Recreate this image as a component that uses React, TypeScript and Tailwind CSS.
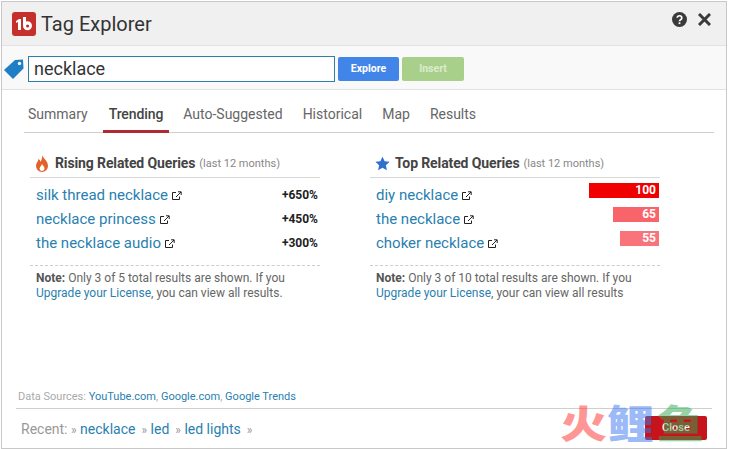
import React from "react";

const font = { fontFamily: "Roboto, sans-serif" };

function Ext() {
  return (
    <svg width="10" height="10" viewBox="0 0 10 10" className="inline-block ml-[4px] align-[-1px]" fill="none" stroke="#222" strokeWidth="1">
      <path d="M7.5 5.5v3h-7v-7h3.5" />
      <path d="M4 6l5-5M6 .8h3.2V4" />
    </svg>
  );
}

function Row({ text, right }: { text: string; right: React.ReactNode }) {
  return (
    <div className="flex h-[24px] items-center justify-between">
      <span className="text-[15px] text-[#2a7fb0]">
        {text}
        <Ext />
      </span>
      {right}
    </div>
  );
}

function Pct({ v }: { v: string }) {
  return <span className="text-[12px] font-bold text-[#222] mr-[2px]">{v}</span>;
}

function Bar({ w, bg, v }: { w: string; bg: string; v: string }) {
  return (
    <span className={`h-[15px] ${w} ${bg} mr-[1px] text-white text-[12px] font-bold leading-[15px] text-right pr-[3px] -mt-[9px]`}>{v}</span>
  );
}

function Panel({
  icon,
  title,
  rows,
  note,
  tail,
}: {
  icon: React.ReactNode;
  title: string;
  rows: React.ReactNode;
  note: string;
  tail: string;
}) {
  return (
    <div className="w-[290px]">
      <div className="flex items-center h-[28px] border-b border-[#d8d8d8] pl-[5px]">
        <span className="w-[20px] flex">{icon}</span>
        <span className="text-[14px] font-bold text-[#444] tracking-[-0.12px]">{title}</span>
        <span className="text-[11px] text-[#888] ml-[4px] mt-[1px]">(last 12 months)</span>
      </div>
      <div className="pt-[5px] pl-[6px] pb-[10px] border-b border-dashed border-[#ccc]">{rows}</div>
      <div className="pl-[6px] pt-[5px] text-[12px] leading-[15px] text-[#666]">
        <b className="text-[#555]">Note:</b> {note}
        <br />
        <span className="text-[#2a7fb0]">Upgrade your License</span>, {tail}
      </div>
    </div>
  );
}

export default function App() {
  return (
    <div style={font} className="relative w-[729px] h-[449px] overflow-hidden bg-white">
      <div className="flex flex-col w-[726px] h-[448px] ml-[1px] mt-[1px] border border-[#c8c8c8] bg-white">
        <header className="flex items-center justify-between h-[44px] bg-[#f0f0f0] border-b border-[#e2e2e2] pl-[10px] pr-[15px] shrink-0">
          <div className="flex items-center gap-[5px]">
            <svg width="24" height="24" viewBox="0 0 24 24">
              <rect width="24" height="24" rx="3" fill="#c4302b" />
              <path d="M4 9l3-2h2v11H6v-8l-2 1zM11 5h3v4.500a4.500 4.500 0 1 1-3 4zM14 14a1.600 1.600 0 1 0 3.200 0a1.600 1.600 0 0 0-3.200 0z" fill="#fff" fillRule="evenodd" />
            </svg>
            <span className="text-[20px] text-[#333]">Tag Explorer</span>
          </div>
          <div className="flex items-center gap-[11px] pb-[8px]">
            <svg width="15" height="15" viewBox="0 0 15 15">
              <circle cx="7.500" cy="7.500" r="7.500" fill="#3a3a3a" />
              <path d="M5.200 5.800a2.300 2.100 0 1 1 3.400 1.900c-.8.500-1.100.8-1.100 1.600" stroke="#fff" strokeWidth="1.700" fill="none" />
              <rect x="6.600" y="10.300" width="1.800" height="1.800" fill="#fff" />
            </svg>
            <svg width="13" height="13" viewBox="0 0 13 13" stroke="#3a3a3a" strokeWidth="3">
              <path d="M1 1l11 11M12 1L1 12" />
            </svg>
          </div>
        </header>
        <div className="flex items-center h-[44px] pt-[3px] bg-[#f9f9f9] border-b border-[#e2e2e2] shrink-0 pl-[1px]">
          <svg width="22" height="22" viewBox="0 0 22 22" className="mr-[3px]">
            <path d="M1 12L12 2l8-.500.500 9L10 21z" fill="#1f7fc4" />
            <circle cx="16.500" cy="5.500" r="1.700" fill="#f9f9f9" />
          </svg>
          <div className="w-[307px] h-[26px] border border-[#2f7fa8] bg-white text-[18px] leading-[24px] text-[#333] pl-[5px]">necklace</div>
          <button className="ml-[3px] w-[61px] h-[24px] rounded-[2px] bg-[#4285e8] text-white text-[10.500px] font-bold">Explore</button>
          <button className="ml-[3px] w-[62px] h-[24px] rounded-[2px] bg-[#a9d08a] text-[#dcebcf] text-[10.500px] font-bold">Insert</button>
        </div>
        <nav className="flex ml-[22px] mr-[12px] h-[43px] border-b border-[#cfcfcf] text-[14px] text-[#666] shrink-0 pl-[4px] gap-[20px]">
          <span className="pt-[14px]">Summary</span>
          <span className="relative pt-[14px] ml-[1px] font-medium text-[#444] tracking-[-0.1px]">
            Trending
            <span className="absolute -left-[6px] -right-[6px] bottom-[-1px] h-[3px] bg-[#b02a30]" />
          </span>
          <span className="pt-[14px]">Auto-Suggested</span>
          <span className="pt-[14px]">Historical</span>
          <span className="pt-[14px]">Map</span>
          <span className="pt-[14px]">Results</span>
        </nav>
        <main className="flex gap-[50px] pl-[28px] pt-[17px] flex-1">
          <Panel
            icon={
              <svg width="14" height="18" viewBox="0 0 14 18">
                <path d="M7 0c1 3 6 6 6 11a6 6 0 0 1-12 0c0-3 2-4 2.500-7C5 5 5.500 6 5.500 7 6.500 5 7.500 3 7 0z" fill="#e2622a" />
                <path d="M7 9c1 2 3 3 2.500 5a2.600 2.600 0 0 1-5 0C4.500 12 6.500 11 7 9z" fill="#fff" />
              </svg>
            }
            title="Rising Related Queries"
            rows={
              <>
                <Row text="silk thread necklace" right={<Pct v="+650%" />} />
                <Row text="necklace princess" right={<Pct v="+450%" />} />
                <Row text="the necklace audio" right={<Pct v="+300%" />} />
              </>
            }
            note="Only 3 of 5 total results are shown. If you"
            tail="you can view all results."
          />
          <Panel
            icon={
              <svg width="15" height="15" viewBox="0 0 24 24">
                <path d="M12 1l3.400 7.400 8 .9-6 5.400 1.700 8L12 18.700 4.900 22.700l1.700-8-6-5.400 8-.9z" fill="#2f6fd0" />
              </svg>
            }
            title="Top Related Queries"
            rows={
              <>
                <Row text="diy necklace" right={<Bar w="w-[70px]" bg="bg-[#f00000]" v="100" />} />
                <Row text="the necklace" right={<Bar w="w-[46px]" bg="bg-[#f9636a]" v="65" />} />
                <Row text="choker necklace" right={<Bar w="w-[39px]" bg="bg-[#f9737a]" v="55" />} />
              </>
            }
            note="Only 3 of 10 total results are shown. If you"
            tail="your can view all results"
          />
        </main>
        <div className="mx-[14px] border-b border-[#cfcfcf] pl-[2px] pb-[3px] text-[11px] text-[#aaa] shrink-0">
          Data Sources: <span className="text-[#2a7fb0]">YouTube.com</span>, <span className="text-[#2a7fb0]">Google.com</span>, <span className="text-[#2a7fb0]">Google Trends</span>
        </div>
        <footer className="flex items-start justify-between h-[39px] ml-[15px] mr-[19px] pl-[4px] pt-[7px] text-[14px] text-[#999] shrink-0">
          <div className="pt-[3px]">
            Recent: <span className="text-[12px]">»</span> <span className="text-[#2a7fb0]">necklace</span>
            <span className="text-[12px] ml-[6px]">»</span> <span className="text-[#2a7fb0]">led</span>
            <span className="text-[12px] ml-[6px]">»</span> <span className="text-[#2a7fb0]">led lights</span>
            <span className="text-[12px] ml-[6px]">»</span>
          </div>
          <button className="w-[62px] h-[24px] rounded-[2px] bg-[#c7141c] text-white text-[11px] font-medium">Close</button>
        </footer>
      </div>
      <div
        className="absolute left-[560px] top-[402px] flex text-[47px] font-black leading-[48px] opacity-50 pointer-events-none whitespace-nowrap scale-y-[0.82] origin-top"
        style={{ fontFamily: '"Noto Sans CJK SC", sans-serif' }}
      >
        <span className="text-[#ff3030]">火</span>
        <span className="text-[#3a78f0]">鲤</span>
        <span className="text-[#2fa84f] ml-[3px]">鱼</span>
      </div>
    </div>
  );
}
